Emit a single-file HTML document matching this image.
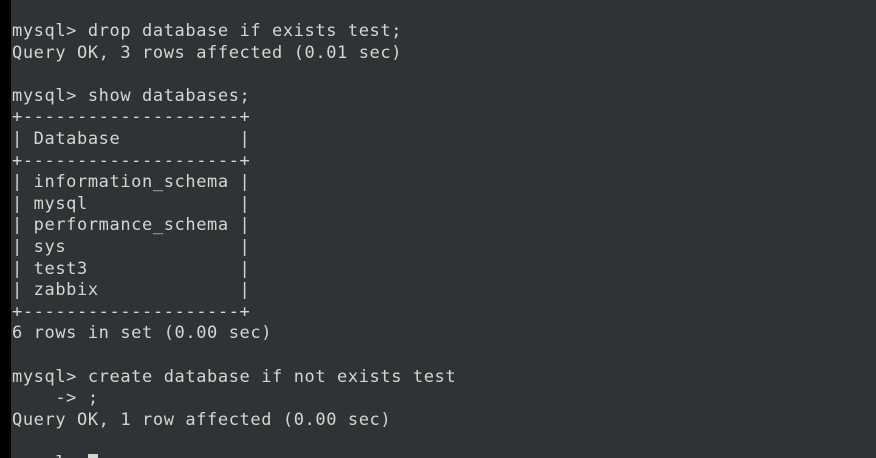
<!DOCTYPE html>
<html><head><meta charset="utf-8"><style>
html,body{margin:0;padding:0;width:876px;height:458px;overflow:hidden;}
body{background:#2e3436;position:relative;}
.strip{position:absolute;left:0;top:0;width:11px;height:458px;background:#000;}
pre{position:absolute;left:12px;top:21px;margin:0;font-family:"DejaVu Sans Mono","Liberation Mono",monospace;font-size:17px;letter-spacing:0.6px;line-height:21.6px;color:#d3d7cf;}
.cur{display:inline-block;width:10px;height:17px;background:#d3d7cf;vertical-align:-3px;}
</style></head><body>
<div class="strip"></div>
<pre>mysql&gt; drop database if exists test;
Query OK, 3 rows affected (0.01 sec)

mysql&gt; show databases;
+--------------------+
| Database           |
+--------------------+
| information_schema |
| mysql              |
| performance_schema |
| sys                |
| test3              |
| zabbix             |
+--------------------+
6 rows in set (0.00 sec)

mysql&gt; create database if not exists test
    -&gt; ;
Query OK, 1 row affected (0.00 sec)

mysql&gt; <span class="cur"></span></pre>
</body></html>
